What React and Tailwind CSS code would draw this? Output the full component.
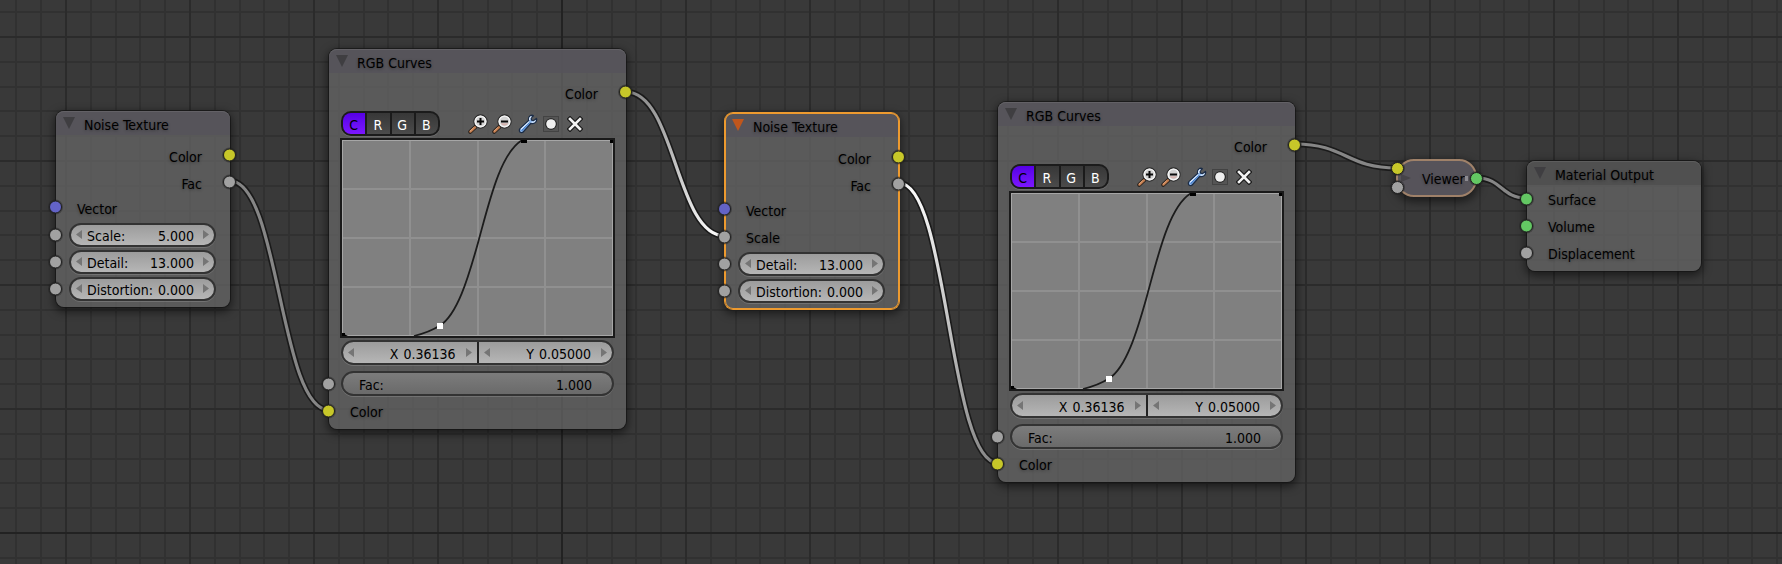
import React from "react";

const FONT = "font-['DejaVu_Sans_Condensed','DejaVu_Sans',sans-serif]";
const HALO = "[text-shadow:0_1px_3px_rgba(0,0,0,0.35)]";

const SOCKETS = {
  color: "bg-[#c7c729]",
  value: "bg-[#a1a1a1]",
  vector: "bg-[#6363c7]",
  shader: "bg-[#63c763]",
};
const SOCKET_SHAPE =
  "absolute size-[13px] rounded-full border border-[#1e1e1e] shadow-[0_0_0_1px_rgba(30,30,30,0.4)]";

const GRID_STEP = 24.8;
const AXIS_X = 562;
const AXIS_Y = 533;
const GRID_STEPS = Array.from({ length: 201 }, (_, i) => i - 100);

function gridTone(i) {
  if (i === 0) return { rank: 2, fill: "#222222" };
  if (i % 5 === 0) return { rank: 1, fill: "#2b2b2b" };
  return { rank: 0, fill: "#313131" };
}

function Grid() {
  const lines = GRID_STEPS.flatMap((i) => [
    { key: `v${i}`, x: Math.round(AXIS_X + i * GRID_STEP) - 1, y: 0, width: 2, height: "100%", ...gridTone(i) },
    { key: `h${i}`, x: 0, y: Math.round(AXIS_Y + i * GRID_STEP) - 1, width: "100%", height: 2, ...gridTone(i) },
  ]).sort((a, b) => a.rank - b.rank);
  return (
    <svg className="absolute inset-0 size-full" aria-hidden="true">
      {lines.map(({ key, rank, ...line }) => (
        <rect key={key} {...line} />
      ))}
    </svg>
  );
}

const LINKS = [
  { id: "l1", from: [230, 181], to: [329, 410], start: "#868686", end: "#868686" },
  { id: "l2", from: [626, 92], to: [725, 236], start: "#868686", end: "#ffffff" },
  { id: "l3", from: [899, 183], to: [998, 463], start: "#ffffff", end: "#868686" },
  { id: "l4", from: [1295, 144], to: [1397, 168], start: "#868686", end: "#868686" },
  { id: "l5", from: [1477, 178], to: [1526, 198], start: "#868686", end: "#868686" },
];

function Links() {
  return (
    <svg className="absolute inset-0 size-full" fill="none" aria-hidden="true">
      {LINKS.map(({ id, from: [x1, y1], to: [x2, y2], start, end }) => {
        const handle = (x2 - x1) / 2;
        const d = `M${x1} ${y1}C${x1 + handle} ${y1} ${x2 - handle} ${y2} ${x2} ${y2}`;
        return (
          <g key={id}>
            <linearGradient id={id} gradientUnits="userSpaceOnUse" x1={x1} y1={y1} x2={x2} y2={y2}>
              <stop offset="0" stopColor={start} />
              <stop offset="1" stopColor={end} />
            </linearGradient>
            <path d={d} stroke="#1a1a1a" strokeWidth="6.4" />
            <path d={d} stroke={`url(#${id})`} strokeWidth="3.2" />
          </g>
        );
      })}
    </svg>
  );
}

function Socket({ type, side }) {
  return (
    <span
      className={`top-1/2 -translate-y-1/2 ${SOCKET_SHAPE} ${SOCKETS[type]} ${
        side === "right" ? "-right-1.5" : "-left-[7px]"
      }`}
    />
  );
}

function Node({ title, place, tint, active, children }) {
  return (
    <section
      aria-label={title}
      className={`absolute flex flex-col rounded-lg bg-[#636363]/80 pb-[5px] ${place} ${
        active
          ? "shadow-[0_0_0_1px_#ed9a2f,inset_0_0_0_1px_#ed9a2f,0_3px_9px_2px_rgba(0,0,0,0.5)]"
          : "shadow-[0_0_0_1px_rgba(20,20,20,0.7),0_3px_9px_2px_rgba(0,0,0,0.5)]"
      }`}
    >
      <header
        className={`flex h-6 items-center gap-[9px] rounded-t-lg pl-[7px] ${tint} ${
          active
            ? "shadow-[inset_0_1px_0_#ed9a2f,inset_1px_0_0_#ed9a2f,inset_-1px_0_0_#ed9a2f]"
            : "shadow-[inset_0_1px_0_rgba(255,255,255,0.08)]"
        }`}
      >
        <button type="button" aria-label={`Collapse ${title}`} className="block">
          <svg width="12" height="12" viewBox="0 0 12 12" className={active ? "fill-[#c0561c]" : "fill-[#3f3e41]"}>
            <path d="M0 0H12L6 12Z" />
          </svg>
        </button>
        <h2 className={`pt-[5px] pb-px text-sm leading-[18px] ${HALO}`}>{title}</h2>
      </header>
      {children}
    </section>
  );
}

function Output({ label, type }) {
  return (
    <div className="relative flex h-[27px] items-center justify-end pt-[5px] pr-7">
      <span className={HALO}>{label}</span>
      <Socket type={type} side="right" />
    </div>
  );
}

function Input({ label, type, height = "h-[27px]" }) {
  return (
    <div className={`relative flex items-center pt-[3px] pl-[21px] ${height}`}>
      <span className={HALO}>{label}</span>
      <Socket type={type} side="left" />
    </div>
  );
}

function Arrow({ label, dir }) {
  return (
    <button type="button" aria-label={label} className="block shrink-0">
      <svg width="6" height="9" viewBox="0 0 6 9" className="fill-[#757575]">
        <path d={dir === "left" ? "M6 0V9L0 4.500Z" : "M0 0V9L6 4.500Z"} />
      </svg>
    </button>
  );
}

const FIELD = "bg-linear-to-b from-[#9c9c9c] to-[#b6b6b6]";
const VALUE = "min-w-0 bg-transparent text-right outline-none";

function NumberField({ label, value }) {
  const name = label.replace(":", "");
  return (
    <div
      className={`flex h-6 flex-1 items-center rounded-full border-2 border-[#333333] px-[5px] shadow-[0_1px_0_rgba(255,255,255,0.15)] ${FIELD}`}
    >
      <Arrow dir="left" label={`Decrease ${name}`} />
      <label className="ml-[5px] mr-[9px] flex min-w-0 flex-1 pt-[3px]">
        <span>{label}</span>
        <input className={`w-0 flex-1 ${VALUE}`} type="text" inputMode="decimal" defaultValue={value} />
      </label>
      <Arrow dir="right" label={`Increase ${name}`} />
    </div>
  );
}

function FieldRow({ label, value }) {
  return (
    <div className="relative flex h-[27px] items-center pr-[14px] pl-[13px]">
      <NumberField label={label} value={value} />
      <Socket type="value" side="left" />
    </div>
  );
}

function CoordField({ label, value }) {
  return (
    <div className={`flex flex-1 items-center px-[5px] ${FIELD}`}>
      <Arrow dir="left" label={`Decrease ${label}`} />
      <label className="mr-2.5 flex flex-1 justify-end pt-[3px]">
        <span>{label}</span>
        <input className={`w-[57px] ${VALUE}`} type="text" inputMode="decimal" defaultValue={value} />
      </label>
      <Arrow dir="right" label={`Increase ${label}`} />
    </div>
  );
}

function Magnifier({ minus }) {
  return (
    <svg className="overflow-visible" width="20" height="20" viewBox="1 0 20 20" fill="none">
      <path d="M2.2 17.8L8.4 12" stroke="#26201c" strokeWidth="4" strokeLinecap="round" />
      <path d="M2.4 17.6L7.2 13.1" stroke="#c07a4c" strokeWidth="2.4" strokeLinecap="round" />
      <path d="M2.3 17L5.4 14" stroke="#edb48c" strokeWidth="0.9" strokeLinecap="round" />
      <circle cx="12.5" cy="7.5" r="6.6" fill="#d2d2d2" stroke="#2a2a2a" strokeWidth="1.2" />
      <circle cx="12.5" cy="7.5" r="5.4" stroke="#f4f4f4" strokeWidth="1.3" />
      {minus && <path d="M8.6 9.2H16.4A4.4 4.4 0 0 1 8.6 9.2Z" fill="#d6b4b0" />}
      <path d={minus ? "M9 7.5H16" : "M9 7.5H16M12.5 4V11"} stroke="#0a0a0a" strokeWidth="2" />
    </svg>
  );
}

function Wrench() {
  const shape =
    "M14.7 1.3C12.4 1 10.4 2.7 10.5 5.2L10.7 6.6L2.2 14.4C1 15.6 1.2 17.2 2 18C3 18.9 4.5 18.8 5.4 17.8L12.9 9.3C15.9 10.2 18.5 8.3 18.7 5.5L18.4 4.4L15.9 6.6L13.5 6.1L13.1 3.9L15.4 1.7Z";
  return (
    <svg className="overflow-visible" width="20" height="20" viewBox="-1 0 20 20" fill="none">
      <path d={shape} fill="#8db8ee" stroke="#1c2d47" strokeWidth="1.3" strokeLinejoin="round" />
      <path d="M3.6 16.6L11.6 8.2" stroke="#3d78c8" strokeWidth="1.3" />
      <path d="M3 15.2L11.2 7.6" stroke="#dcebff" strokeWidth="1.2" />
      <path d="M11.7 6.2C11.3 4.2 12 3 13.4 2.4M13.6 8.2C15.6 8.6 17 7.6 17.5 6.4" stroke="#e6f0ff" strokeWidth="1.1" />
    </svg>
  );
}

function ClipDot() {
  return (
    <svg width="16" height="16" viewBox="0 0 16 16" fill="none">
      <rect x="0.5" y="0.5" width="15" height="15" fill="#555555" stroke="#434343" />
      <circle cx="8" cy="8" r="5.8" fill="#1c1c1c" />
      <circle cx="8" cy="8" r="4.8" fill="#efefef" />
    </svg>
  );
}

function Cross() {
  return (
    <svg width="16" height="16" viewBox="0 0 16 16" fill="none">
      <path d="M3 3L13 13M13 3L3 13" stroke="#1a1a1a" strokeWidth="4.8" strokeLinecap="square" />
      <path d="M3 3L13 13M13 3L3 13" stroke="#f2f2f2" strokeWidth="2.6" strokeLinecap="square" />
    </svg>
  );
}

const TOOLS = [
  { label: "Zoom in", icon: <Magnifier /> },
  { label: "Zoom out", icon: <Magnifier minus /> },
  { label: "Tools", icon: <Wrench /> },
  { label: "Clipping", icon: <ClipDot /> },
  { label: "Delete point", icon: <Cross /> },
];

function Channels() {
  return (
    <div className="flex h-[25px] w-[99px] gap-0.5 overflow-hidden rounded-[10px] border-2 border-[#1b1b1b] bg-[#1b1b1b] shadow-[0_1px_0_rgba(255,255,255,0.12)]">
      {["C", "R", "G", "B"].map((name) => (
        <button
          key={name}
          type="button"
          aria-pressed={name === "C"}
          className={`flex flex-1 items-center justify-center bg-linear-to-b pt-0.5 pr-px ${
            name === "C" ? "from-[#5600e6] to-[#7c16ff] text-black" : "from-[#373737] to-[#4b4b4b] text-white"
          }`}
        >
          {name}
        </button>
      ))}
    </div>
  );
}

function CurvePlot() {
  return (
    <svg
      className="-mx-px block"
      width="275"
      height="200"
      viewBox="0 0 275 200"
      fill="none"
      role="img"
      aria-label="Curve"
    >
      <rect x="1" y="1" width="273" height="198" fill="#808080" stroke="#1a1a1a" strokeWidth="2" />
      <path d="M70 2V198M138 2V198M205 2V198M2 51H273M2 100H273M2 149H273" stroke="#909090" strokeWidth="2" />
      <rect x="2.5" y="2.5" width="270" height="195" stroke="#a6a6a6" />
      <path
        d="M74 198C84 195.500 93 192 100 187.500C117 177 128 141 138.300 103.700C149 65 160 16 181.500 2.500"
        stroke="#1c1c1c"
        strokeWidth="1.8"
      />
      <path d="M2 195H5V196.500L8 198H2ZM181 2H187V5H181ZM270 2H273V5H270Z" fill="#000000" />
      <rect x="97" y="185" width="6" height="6" fill="#ffffff" />
    </svg>
  );
}

function CurvesNode({ place }) {
  return (
    <Node title="RGB Curves" place={`w-[297px] ${place}`} tint="bg-[#56535a]/85">
      <div className="flex flex-col pt-[5px]">
        <Output label="Color" type="color" />
        <div className="flex flex-col gap-0.5 px-3 pt-1.5">
          <div className="flex items-center">
            <Channels />
            <div className="ml-[27px] flex items-center">
              {TOOLS.map(({ label, icon }) => (
                <button key={label} type="button" aria-label={label} className="flex w-6 justify-center">
                  {icon}
                </button>
              ))}
            </div>
          </div>
          <CurvePlot />
          <div className="flex h-[25px] gap-0.5 overflow-hidden rounded-full border-2 border-[#333333] bg-[#222222] shadow-[0_1px_0_rgba(255,255,255,0.15)]">
            <CoordField label="X" value="0.36136" />
            <CoordField label="Y" value="0.05000" />
          </div>
        </div>
        <div className="relative mt-[5px] flex h-[27px] items-center px-3">
          <label className="flex h-[25px] flex-1 items-center rounded-full border-2 border-[#333333] bg-linear-to-b from-[#7c7c7c] to-[#6a6a6a] pt-[3px] pr-5 pl-4 shadow-[0_1px_0_rgba(255,255,255,0.15)]">
            <span>Fac:</span>
            <input className={`flex-1 ${VALUE}`} type="text" inputMode="decimal" defaultValue="1.000" />
          </label>
          <Socket type="value" side="left" />
        </div>
        <Input label="Color" type="color" />
      </div>
    </Node>
  );
}

function ViewerNode() {
  return (
    <section
      aria-label="Viewer"
      className="absolute top-[159px] left-[1396px] flex h-[38px] w-[81px] items-center rounded-[18px] border-2 border-[#9f8169] bg-[#56535a] pl-[3px] shadow-[0_3px_9px_2px_rgba(0,0,0,0.5)]"
    >
      <button type="button" aria-label="Expand Viewer" className="block">
        <svg width="10" height="8" viewBox="0 0 10 8" className="fill-[#464448]">
          <path d="M0 0V8L10 4Z" />
        </svg>
      </button>
      <h2 className={`ml-[11px] pt-0.5 ${HALO}`}>Viewer</h2>
      <span className="h-[5px] w-[3px] bg-[#8d8b91]" />
      <span className={`top-px -left-[7px] ${SOCKET_SHAPE} ${SOCKETS.color}`} />
      <span className={`top-5 -left-[7px] ${SOCKET_SHAPE} ${SOCKETS.value}`} />
      <span className={`top-[11px] -right-2 ${SOCKET_SHAPE} ${SOCKETS.shader}`} />
    </section>
  );
}

export default function App() {
  return (
    <main className={`relative h-screen w-full overflow-hidden bg-[#393939] text-sm leading-[18px] text-black ${FONT}`}>
      <Grid />
      <Links />

      <Node title="Noise Texture" place="top-[111px] left-[56px] w-[174px]" tint="bg-[#56535a]/85">
        <div className="flex flex-col pt-1.5">
          <Output label="Color" type="color" />
          <Output label="Fac" type="value" />
          <Input label="Vector" type="vector" height="mb-0.5 h-6" />
          <FieldRow label="Scale:" value="5.000" />
          <FieldRow label="Detail:" value="13.000" />
          <FieldRow label="Distortion:" value="0.000" />
        </div>
      </Node>

      <CurvesNode place="top-[49px] left-[329px]" />

      <Node title="Noise Texture" place="top-[113px] left-[725px] w-[174px]" tint="bg-[#56535a]/85" active>
        <div className="flex flex-col pt-1.5">
          <Output label="Color" type="color" />
          <Output label="Fac" type="value" />
          <Input label="Vector" type="vector" height="mb-0.5 h-6" />
          <Input label="Scale" type="value" />
          <FieldRow label="Detail:" value="13.000" />
          <FieldRow label="Distortion:" value="0.000" />
        </div>
      </Node>

      <CurvesNode place="top-[102px] left-[998px]" />
      <ViewerNode />

      <Node title="Material Output" place="top-[161px] left-[1527px] w-[174px]" tint="bg-[#4f4f4f]/85">
        <Input label="Surface" type="shader" />
        <Input label="Volume" type="shader" />
        <Input label="Displacement" type="value" />
      </Node>
    </main>
  );
}
